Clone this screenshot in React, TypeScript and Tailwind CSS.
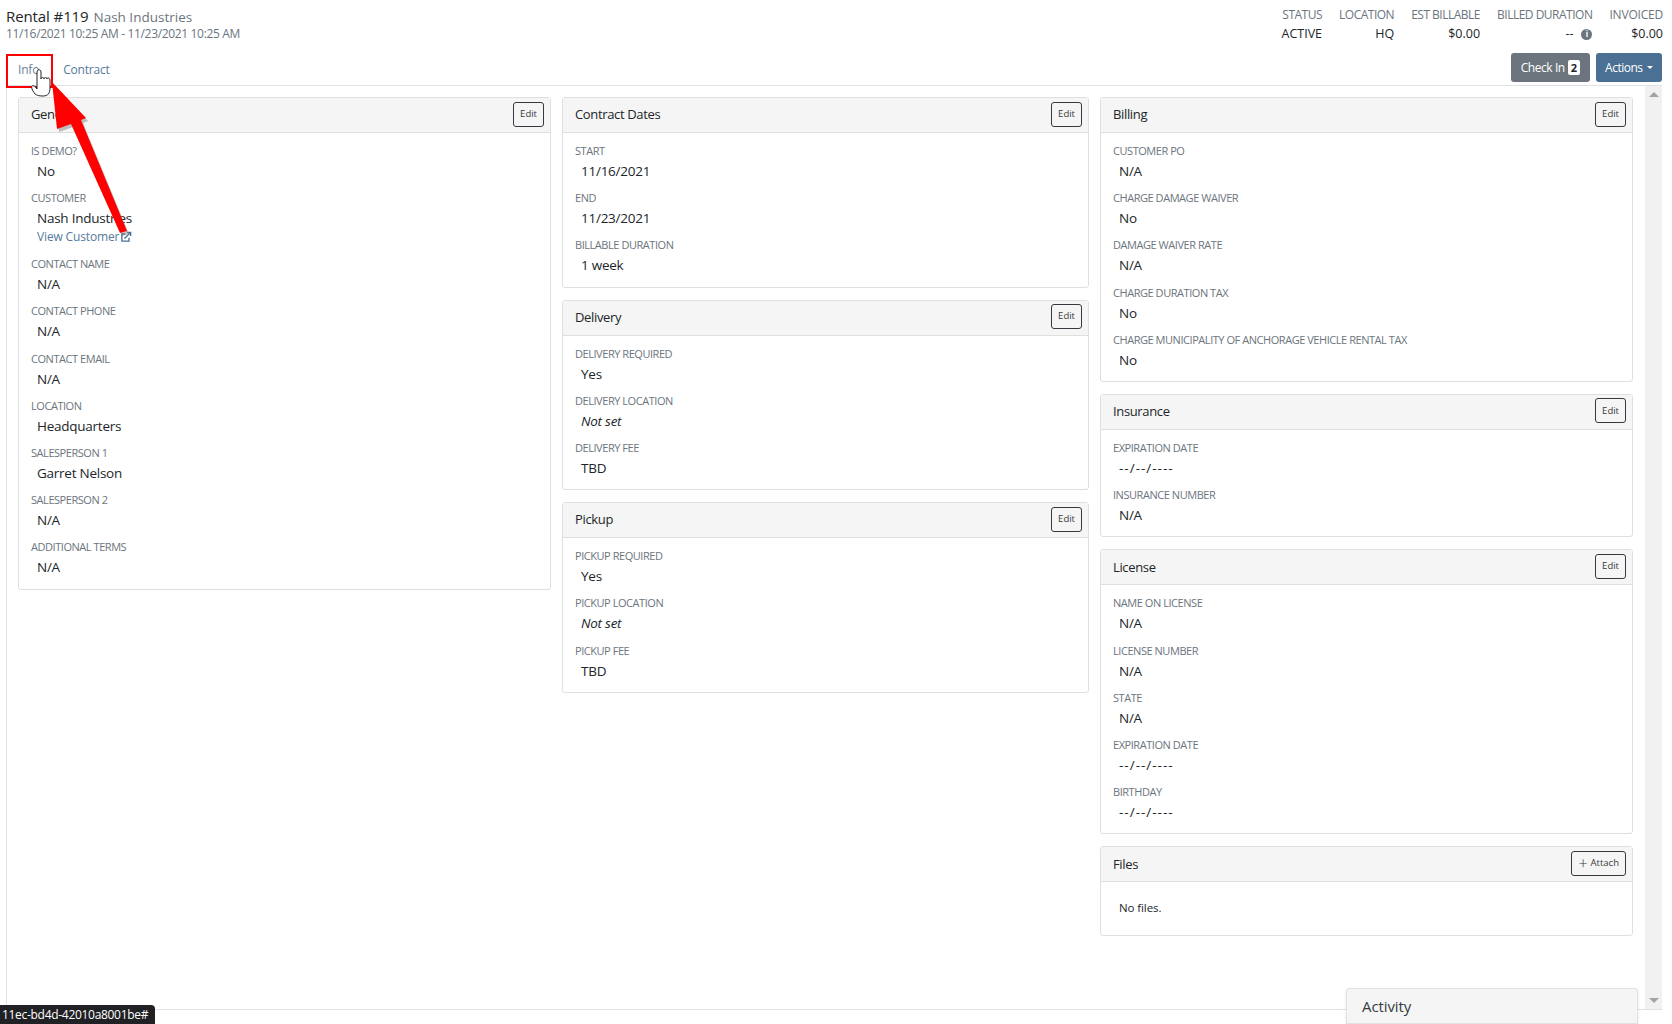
import React from "react";

type Row = { l: string; v: string; it?: boolean; link?: boolean };

function Field({ r }: { r: Row }) {
  const isDate = r.v === "--/--/----";
  return (
    <div className="mb-[6.2px]">
      <div className="text-[11px] leading-[17px] text-[#6c757d] tracking-[-0.45px]">{r.l}</div>
      <div className={`pl-[6px] text-[13.5px] leading-[24px] text-[#212529] ${isDate ? "tracking-[1px]" : "tracking-[-0.25px]"} ${r.it ? "italic" : ""}`}>{r.v}</div>
      {r.link && (
        <div className="pl-[6px] -mt-[1px] mb-[10px] flex h-[16px] items-center text-[12px] leading-[16px] tracking-[-0.15px] text-[#557a9c]">
          View Customer
          <svg viewBox="0 0 16 16" className="ml-[1px] h-[12px] w-[12px]" fill="none" stroke="#4a7094" strokeWidth="1.8">
            <path d="M12 9v4.5H2.5V4H7" />
            <path d="M6 10 14 2M9.5 1.8h4.7v4.7" />
          </svg>
        </div>
      )}
    </div>
  );
}

function Panel({ title, action, rows, children }: { title: string; action?: React.ReactNode; rows?: Row[]; children?: React.ReactNode }) {
  return (
    <div className="rounded-[3px] border border-[#dfdfdf] bg-white">
      <div className="flex h-[35px] items-center justify-between border-b border-[#dfdfdf] bg-[#f5f5f5] pl-[12px] pr-[6px]">
        <span className="text-[13px] tracking-[-0.35px] text-[#212529]">{title}</span>
        <span className="mb-[2px] flex h-[25px] items-center rounded-[3px] border border-[#343a40] px-[6px] text-[9.5px] text-[#343a40]">{action ?? "Edit"}</span>
      </div>
      <div className="px-[12px] pt-[9px] pb-[3px]">
        {rows?.map((r) => <Field key={r.l} r={r} />)}
        {children}
      </div>
    </div>
  );
}

const general: Row[] = [
  { l: "IS DEMO?", v: "No" },
  { l: "CUSTOMER", v: "Nash Industries", link: true },
  { l: "CONTACT NAME", v: "N/A" },
  { l: "CONTACT PHONE", v: "N/A" },
  { l: "CONTACT EMAIL", v: "N/A" },
  { l: "LOCATION", v: "Headquarters" },
  { l: "SALESPERSON 1", v: "Garret Nelson" },
  { l: "SALESPERSON 2", v: "N/A" },
  { l: "ADDITIONAL TERMS", v: "N/A" },
];

const stats = [
  ["STATUS", "ACTIVE"],
  ["LOCATION", "HQ"],
  ["EST BILLABLE", "$0.00"],
  ["BILLED DURATION", "--"],
  ["INVOICED", "$0.00"],
];

export default function App() {
  return (
    <div className="relative h-[1024px] w-[1672px] overflow-hidden bg-white font-['Open_Sans',sans-serif]">
      <header className="flex h-[53px] items-start justify-between pl-[6px] pr-[9px] pt-[6px]">
        <div className="pt-[1px]">
          <div className="text-[15px] leading-[19px] text-[#212529]">
            <span className="font-medium tracking-[-0.1px]">Rental #119</span>{" "}
            <span className="ml-[1px] text-[13.5px] text-[#6c757d]">Nash Industries</span>
          </div>
          <div className="-mt-[1px] text-[12px] leading-[15px] tracking-[-0.34px] text-[#6c757d]">11/16/2021 10:25 AM - 11/23/2021 10:25 AM</div>
        </div>
        <div className="flex gap-[17px]">
          {stats.map(([a, b]) => (
            <div key={a} className="text-right">
              <div className={`text-[12px] leading-[18px] text-[#6c757d] ${a === "INVOICED" ? "tracking-[-0.2px]" : "tracking-[-0.5px]"}`}>{a}</div>
              <div className="mt-[1px] flex items-center justify-end text-[12.5px] leading-[18px] text-[#212529]">
                {b}
                {a === "BILLED DURATION" && (
                  <span className="ml-[8px] flex h-[11px] w-[11px] items-center justify-center rounded-full bg-[#6c757d] text-[8px] font-bold text-white">i</span>
                )}
              </div>
            </div>
          ))}
        </div>
      </header>

      <nav className="ml-[6px] mr-[10px] flex h-[33px] items-start justify-between border-b border-[#dee2e6]">
        <div className="flex pt-[2px] text-[12px] leading-[30px] tracking-[-0.2px] text-[#557a9c]">
          <span className="px-[12px] text-[#6c8299]">Info</span>
          <span className="px-[12px]">Contract</span>
        </div>
        <div className="flex gap-[6px]">
          <span className="flex h-[29px] items-center rounded-[3px] bg-[#6c757d] px-[10px] text-[12px] tracking-[-0.45px] text-white">
            Check In
            <span className="ml-[3px] rounded-[2px] bg-white px-[3px] text-[11px] font-bold leading-[15px] text-[#212529]">2</span>
          </span>
          <span className="flex h-[29px] items-center rounded-[3px] bg-[#4a7094] px-[9.5px] text-[12px] tracking-[-0.5px] text-white">
            Actions
            <span className="ml-[4px] border-x-[3px] border-t-[3px] border-x-transparent border-t-white" />
          </span>
        </div>
      </nav>

      <div className="ml-[6px] mr-[10px] flex h-[924px] border-b border-l border-[#dee2e6]">
        <main className="grid flex-1 grid-cols-[533px_527px_533px] items-start gap-x-[11px] pl-[11px] pt-[11px]">
          <Panel title="General" rows={general} />
          <div className="flex flex-col gap-[12px]">
            <Panel title="Contract Dates" rows={[{ l: "START", v: "11/16/2021" }, { l: "END", v: "11/23/2021" }, { l: "BILLABLE DURATION", v: "1 week" }]} />
            <Panel title="Delivery" rows={[{ l: "DELIVERY REQUIRED", v: "Yes" }, { l: "DELIVERY LOCATION", v: "Not set", it: true }, { l: "DELIVERY FEE", v: "TBD" }]} />
            <Panel title="Pickup" rows={[{ l: "PICKUP REQUIRED", v: "Yes" }, { l: "PICKUP LOCATION", v: "Not set", it: true }, { l: "PICKUP FEE", v: "TBD" }]} />
          </div>
          <div className="flex flex-col gap-[12px]">
            <Panel title="Billing" rows={[{ l: "CUSTOMER PO", v: "N/A" }, { l: "CHARGE DAMAGE WAIVER", v: "No" }, { l: "DAMAGE WAIVER RATE", v: "N/A" }, { l: "CHARGE DURATION TAX", v: "No" }, { l: "CHARGE MUNICIPALITY OF ANCHORAGE VEHICLE RENTAL TAX", v: "No" }]} />
            <Panel title="Insurance" rows={[{ l: "EXPIRATION DATE", v: "--/--/----" }, { l: "INSURANCE NUMBER", v: "N/A" }]} />
            <Panel title="License" rows={[{ l: "NAME ON LICENSE", v: "N/A" }, { l: "LICENSE NUMBER", v: "N/A" }, { l: "STATE", v: "N/A" }, { l: "EXPIRATION DATE", v: "--/--/----" }, { l: "BIRTHDAY", v: "--/--/----" }]} />
            <Panel
              title="Files"
              action={
                <>
                  <span className="mr-[3px] text-[16px] font-light leading-none">+</span>Attach
                </>
              }
            >
              <div className="h-[41px] pl-[6px] pt-[5px] text-[11.5px] leading-[24px] tracking-[-0.1px] text-[#212529]">No files.</div>
            </Panel>
          </div>
        </main>
        <div className="flex h-[923px] w-[17px] flex-col items-center justify-between bg-[#f1f1f1] py-[6px]">
          <span className="border-x-[5px] border-b-[5px] border-x-transparent border-b-[#a3a3a3]" />
          <span className="border-x-[5px] border-t-[5px] border-x-transparent border-t-[#a3a3a3]" />
        </div>
      </div>

      {/* annotation */}
      <div className="absolute left-[6px] top-[54px] h-[34px] w-[47px] border-[2px] border-[#ff0000]" />
      <svg className="absolute left-0 top-0" width="200" height="260" viewBox="0 0 200 260">
        <g transform="translate(-1 -6)">
          <path d="M36 100c-3-4-4-7-3-8s3 0 5 3V78c0-3 4-3 4 0v7c0-2 3-2 3 0 0-2 3-2 3 0 0-2 3-1 3 1v8c0 5-2 8-7 8s-6-1-8-2z" fill="#fff" stroke="#222" strokeWidth="1" />
        </g>
        <path d="M52 82 57 129 71 124 120 233 127 231 81 120 86 118Z" fill="#777" opacity="0.45" transform="translate(2 3)" />
        <path d="M52 82 57 129 71 124 120 233 127 231 81 120 86 118Z" fill="#ff0000" />
      </svg>

      <div className="absolute bottom-0 left-0 h-[19px] rounded-tr-[4px] bg-[#202124] pl-[2px] pr-[7px] text-[12px] leading-[19px] tracking-[-0.3px] text-white">11ec-bd4d-42010a8001be#</div>
      <div className="absolute bottom-0 left-[1346px] h-[36px] w-[292px] rounded-t-[3px] border border-[#e2e2e2] bg-[#f5f5f5] pl-[15px] text-[15px] font-medium leading-[34px] tracking-[-0.1px] text-[#343a40] shadow-sm">Activity</div>
    </div>
  );
}
